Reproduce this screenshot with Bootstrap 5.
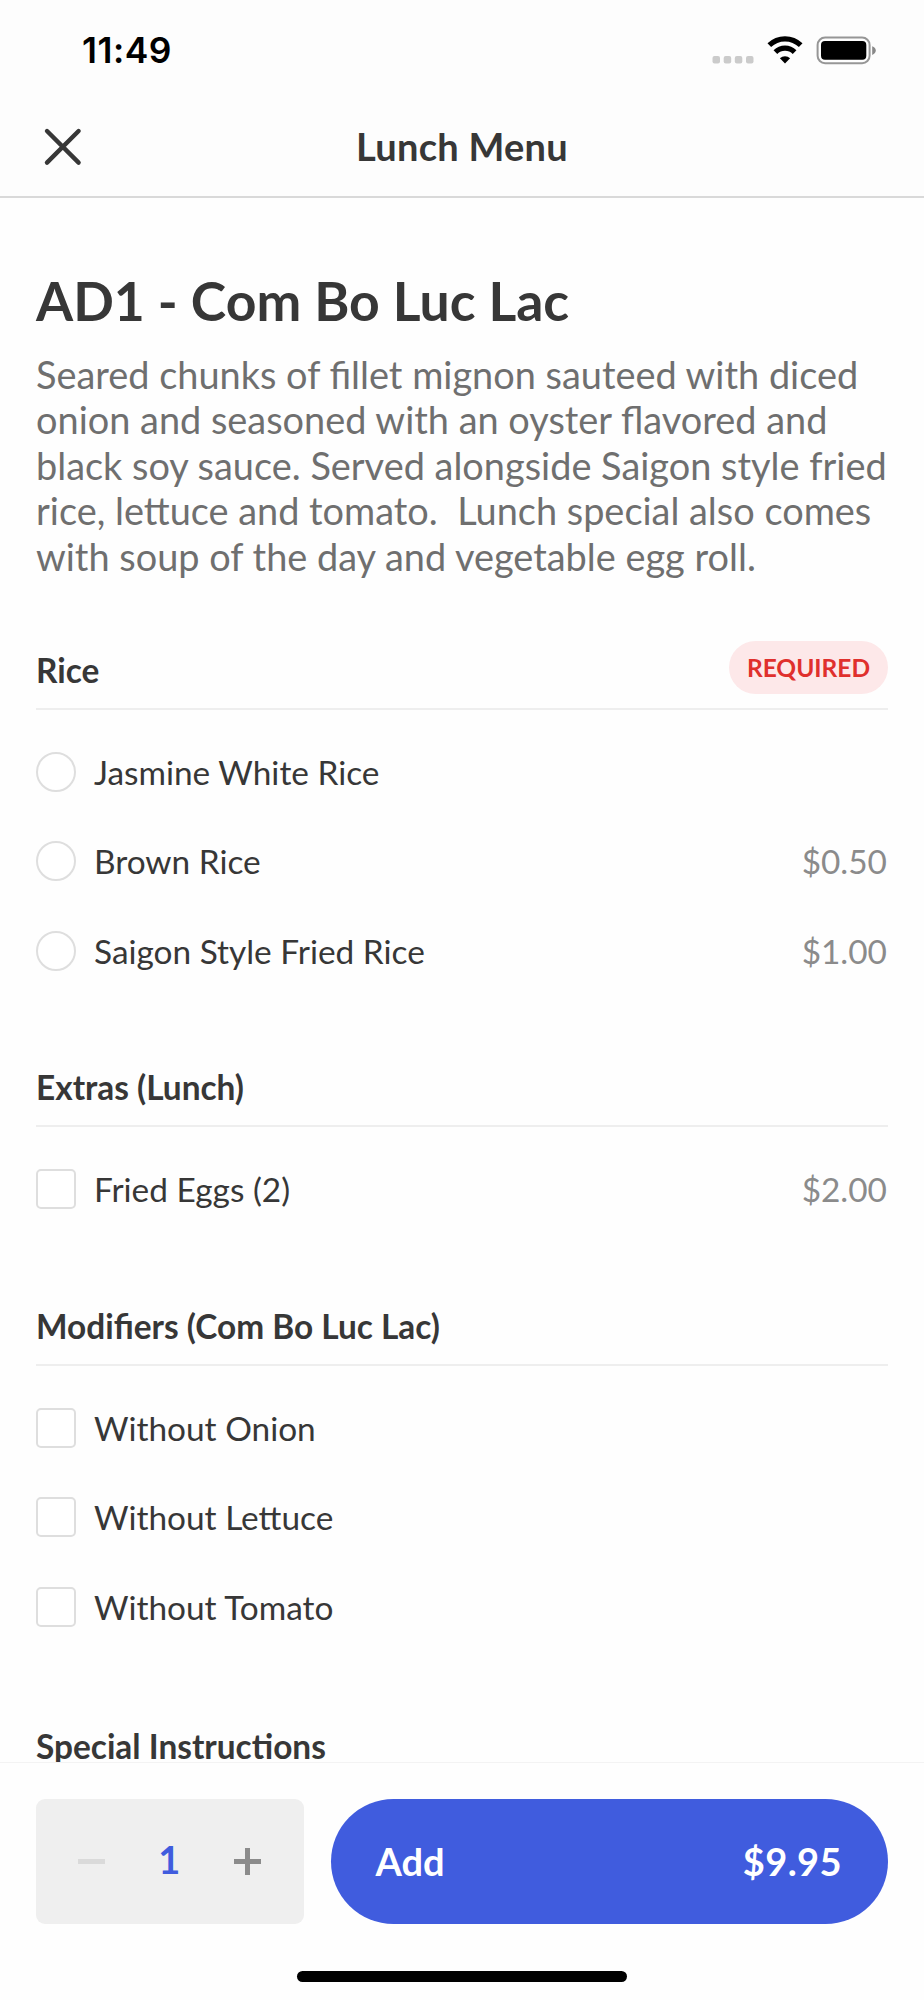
<!DOCTYPE html>
<html lang="en">
<head>
<meta charset="utf-8">
<meta name="viewport" content="width=device-width, initial-scale=1">
<title>Lunch Menu</title>
<link href="https://cdn.jsdelivr.net/npm/bootstrap@5.3.0/dist/css/bootstrap.min.css" rel="stylesheet">
<style>
  body { font-family: Lato, "Liberation Sans", sans-serif; color: #373737; background: #fefefe; line-height: 1.2; font-size: 33.4px; }
  .screen { height: 2000px; }
  .topbar { height: 198px; background: #fdfdfd; border-bottom: 2px solid #d9d9d9; }
  .statusbar { height: 100px; padding: 2px 48px 0 82px; }
  .clock { font: 600 35.4px/1.2 Inter, sans-serif; color: #000; letter-spacing: .5px; }
  .titlebar { height: 94px; display: grid; grid-template-columns: 90px 1fr 90px; align-items: center; padding: 0 36px; }
  .bar-title { font-size: 38px; letter-spacing: .25px; }
  .content { padding: 70px 36px 0; }
  .dish { font-size: 53.5px; line-height: 64px; margin-bottom: 20px; }
  .desc { font-size: 37.9px; line-height: 45.4px; color: #6f6f6f; white-space: pre-line; margin-bottom: 62px; }
  .group-head { height: 69px; border-bottom: 2px solid #eee; padding-bottom: 14px; margin-bottom: 17.5px; }
  .group-head h2 { font-size: 33.4px; line-height: 40px; margin-bottom: 4px; }
  .group { margin-bottom: 62.8px; }
  .required { width: 159px; height: 53px; background: #fde8e9; color: #e0302d; font-size: 24.5px; }
  .option { height: 89.3px; }
  .option .form-check-input { width: 40px; height: 40px; margin: 0 18px 0 0; border: 2px solid #dedede; background-color: #fff; }
  .option .form-check-input[type=checkbox] { border-radius: 5px; }
  .price { color: #8b8b8b; margin-right: 1px; }
  .footer-bar { height: 238px; background: #fefefe; border-top: 1px solid #f3f3f3; padding: 36px 36px 0; }
  .stepper { width: 268px; height: 125px; background: #efefef; border-radius: 9px; padding: 0 42.5px 0 42px; }
  .qty { color: #405cde; font-size: 38px; margin: 0 1px 3px 0; }
  .add-btn { height: 125px; background: #405cde; color: #fff; font-size: 38px; padding: 0 46px 0 45px; margin-left: 26.5px; }
  .total { letter-spacing: .4px; }
  .home { width: 330px; height: 11px; background: #000; margin-top: 47px; }
</style>
</head>
<body>
<div class="screen d-flex flex-column overflow-hidden">
  <header class="topbar flex-shrink-0">
    <div class="statusbar d-flex align-items-center justify-content-between">
      <span class="clock">11:49</span>
      <svg width="164" height="32" viewBox="0 0 164 32">
        <g fill="#cbcbcb"><rect x="0.5" y="21" width="7.5" height="7.5" rx="2"/><rect x="11.7" y="21" width="7.5" height="7.5" rx="2"/><rect x="22.8" y="21" width="7.5" height="7.5" rx="2"/><rect x="34" y="21" width="7.5" height="7.5" rx="2"/></g>
        <g fill="none" stroke="#000" stroke-width="5.2"><path d="M57.3 10.2a22.5 22.5 0 0 1 31.4 0"/><path d="M63.4 17.1a13.6 13.6 0 0 1 19.2 0"/></g>
        <path d="M67.9 23.3a7.4 7.4 0 0 1 10.2 0L73 28.5z"/>
        <rect x="105.6" y="2.6" width="52" height="25.6" rx="7.5" fill="none" stroke="#969696" stroke-width="2"/>
        <rect x="109" y="6" width="45.3" height="18.8" rx="4"/>
        <path d="M160.2 11.2q3.6 1.5 3.6 4.4t-3.6 4.4z" fill="#888"/>
      </svg>
    </div>
    <div class="titlebar">
      <svg width="54" height="54" viewBox="0 0 54 54" stroke="#373737" stroke-width="4.4" stroke-linecap="round"><path d="M11 11 42.6 42.6M42.6 11 11 42.6"/></svg>
      <span class="bar-title fw-bold text-center">Lunch Menu</span>
    </div>
  </header>

  <main class="content flex-grow-1 overflow-hidden">
    <h1 class="dish fw-bold">AD1 - Com Bo Luc Lac</h1>
    <p class="desc">Seared chunks of fillet mignon sauteed with diced
onion and seasoned with an oyster flavored and
black soy sauce. Served alongside Saigon style fried
rice, lettuce and tomato.&nbsp; Lunch special also comes
with soup of the day and vegetable egg roll.</p>

    <section class="group">
      <div class="group-head d-flex justify-content-between align-items-end">
        <h2 class="fw-bold">Rice</h2>
        <span class="required rounded-pill fw-bold d-flex align-items-center justify-content-center">REQUIRED</span>
      </div>
      <label class="option d-flex align-items-center"><input class="form-check-input" type="radio" name="rice"><span>Jasmine White Rice</span></label>
      <label class="option d-flex align-items-center"><input class="form-check-input" type="radio" name="rice"><span>Brown Rice</span><span class="price ms-auto">$0.50</span></label>
      <label class="option d-flex align-items-center"><input class="form-check-input" type="radio" name="rice"><span>Saigon Style Fried Rice</span><span class="price ms-auto">$1.00</span></label>
    </section>

    <section class="group">
      <div class="group-head d-flex align-items-end"><h2 class="fw-bold">Extras (Lunch)</h2></div>
      <label class="option d-flex align-items-center"><input class="form-check-input" type="checkbox"><span>Fried Eggs (2)</span><span class="price ms-auto">$2.00</span></label>
    </section>

    <section class="group">
      <div class="group-head d-flex align-items-end"><h2 class="fw-bold">Modifiers (Com Bo Luc Lac)</h2></div>
      <label class="option d-flex align-items-center"><input class="form-check-input" type="checkbox"><span>Without Onion</span></label>
      <label class="option d-flex align-items-center"><input class="form-check-input" type="checkbox"><span>Without Lettuce</span></label>
      <label class="option d-flex align-items-center"><input class="form-check-input" type="checkbox"><span>Without Tomato</span></label>
    </section>

    <section class="group" style="padding-top:2.5px">
      <div class="group-head d-flex align-items-end"><h2 class="fw-bold">Special Instructions</h2></div>
    </section>
  </main>

  <footer class="footer-bar flex-shrink-0">
    <div class="d-flex">
      <div class="stepper d-flex align-items-center justify-content-between flex-shrink-0">
        <svg width="27" height="27" viewBox="0 0 27 27" fill="#dadada"><path d="M0 11h27v5H0z"/></svg>
        <span class="qty fw-bold">1</span>
        <svg width="27" height="27" viewBox="0 0 27 27" fill="#8b8b8b"><path d="M0 11h11V0h5v11h11v5H16v11h-5V16H0z"/></svg>
      </div>
      <button class="btn add-btn rounded-pill flex-grow-1 d-flex align-items-center justify-content-between fw-bold border-0"><span>Add</span><span class="total">$9.95</span></button>
    </div>
    <div class="home rounded-pill mx-auto"></div>
  </footer>
</div>
<script src="https://cdn.jsdelivr.net/npm/bootstrap@5.3.0/dist/js/bootstrap.bundle.min.js"></script>
</body>
</html>
